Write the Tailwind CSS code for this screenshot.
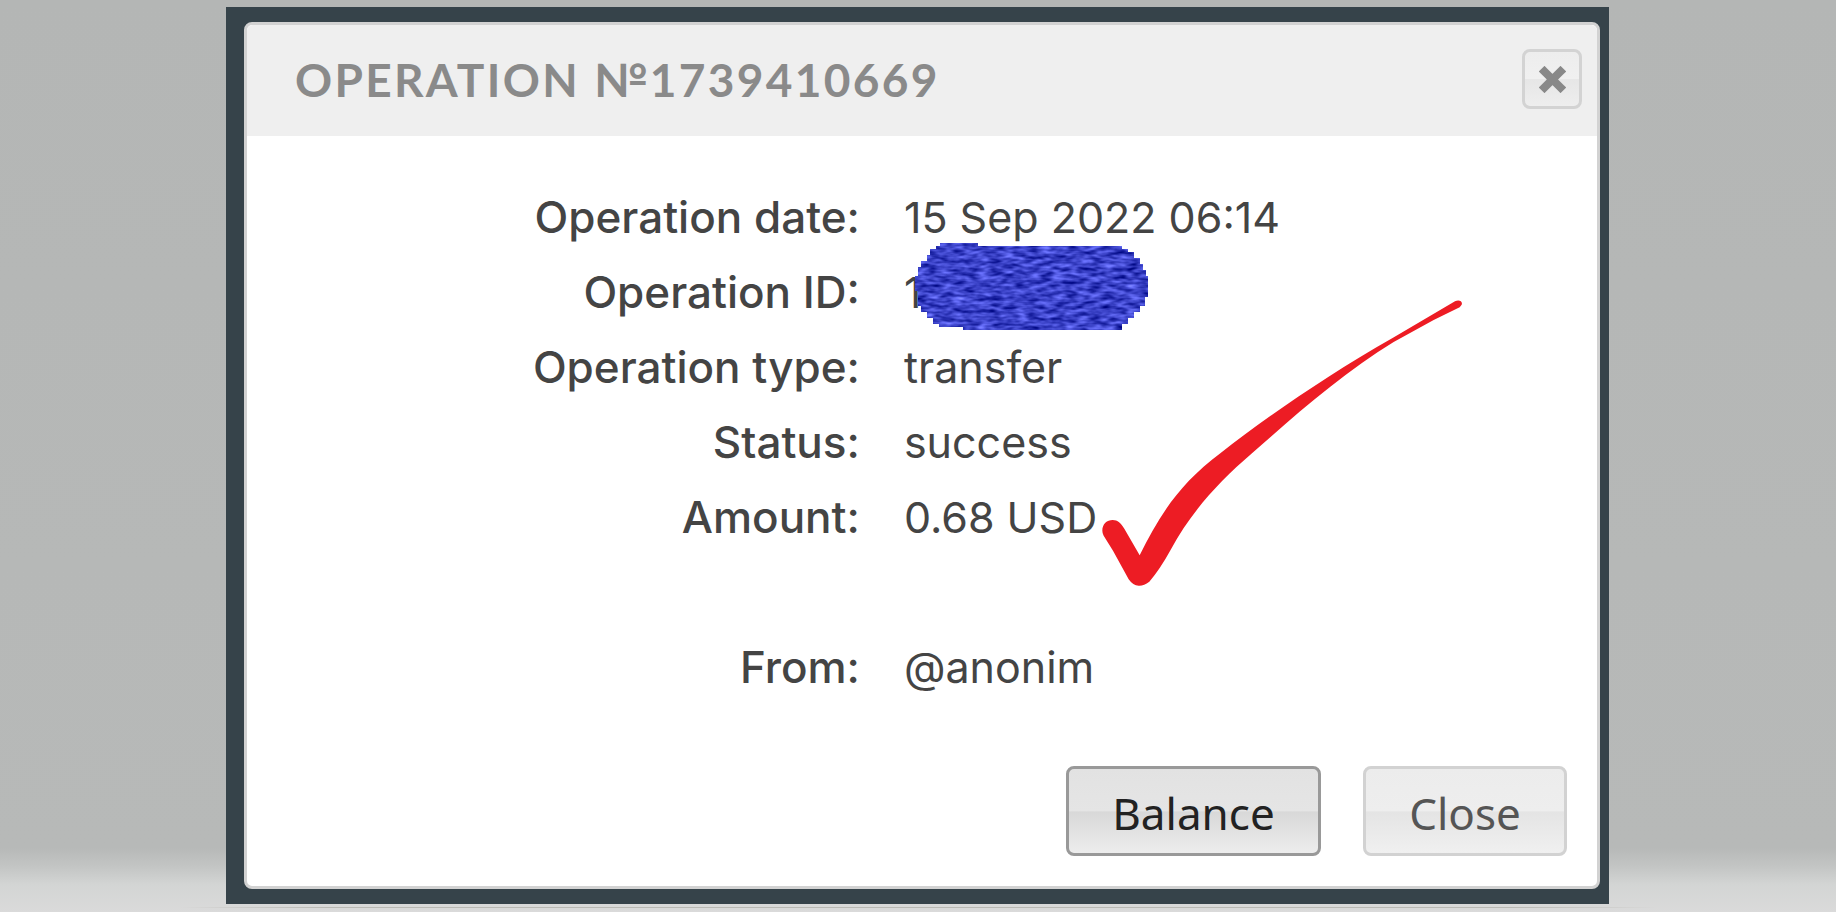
<!DOCTYPE html>
<html lang="en">
<head>
<meta charset="utf-8">
<title>Operation details</title>
<script src="https://cdn.jsdelivr.net/npm/@tailwindcss/browser@4"></script>
</head>
<body class="flex min-h-screen flex-col bg-[linear-gradient(to_bottom,#b4b6b5_0,#b7b9b8_93%,#c3c5c4_95%,#d3d5d4_97%,#dadada_100%)]">
<main class="mt-[7px] mr-[227px] ml-[226px] flex grow flex-col bg-[#36434a] pt-[15px] pr-[9px] pb-[15px] pl-[18px]">
  <section role="dialog" aria-labelledby="title" class="flex grow flex-col rounded-lg border-3 border-[#d2d2d2] bg-white">
    <header class="flex h-[111px] shrink-0 items-center justify-between rounded-t-md bg-[#efefef] pr-[15px] pb-[3px] pl-12">
      <h1 id="title" class="font-['Lato'] text-[46px] font-bold tracking-wider whitespace-nowrap text-[#8a8a8a]">OPERATION №1739410669</h1>
      <button type="button" aria-label="Close dialog" class="flex size-[60px] items-center justify-center rounded-lg border-3 border-[#d3d3d3] bg-[linear-gradient(to_bottom,#ededed_0,#f0f0f0_50%,#e6e6e6_51%,#eeeeee_100%)]">
        <svg class="size-[27px]" viewBox="0 0 27 27" stroke="#888" stroke-width="8" stroke-linecap="square" aria-hidden="true"><path d="M5.500 5.500L21.500 21.500M21.500 5.500L5.500 21.500"/></svg>
      </button>
    </header>
    <dl class="mt-11 grid grid-cols-[45.4%_1fr] gap-x-11 font-['Inter'] text-[43px] leading-[75px] whitespace-nowrap text-[#444] [&>dt]:text-right [&>dt]:text-[44px] [&>dt]:font-medium">
      <dt>Operation date:</dt><dd>15 Sep 2022 06:14</dd>
      <dt>Operation ID:</dt>
      <dd class="relative">1
        <!-- scribble over the identifier -->
        <svg class="absolute -top-3 left-[11px] h-[88px] w-[233px]" viewBox="0 0 233 88" aria-hidden="true">
          <defs>
            <filter id="scribble" x="0" y="0" width="1" height="1" color-interpolation-filters="sRGB">
              <feTurbulence type="fractalNoise" baseFrequency="0.08 0.24" numOctaves="2" seed="7" result="n"/>
              <feColorMatrix in="n" values=".7 0 0 0 -.12  .7 0 0 0 -.09  .8 0 0 0 .38  0 0 0 0 1"/>
              <feComposite in2="SourceGraphic" operator="in"/>
            </filter>
          </defs>
          <path filter="url(#scribble)" fill="#3a3acb" d="M25 0H63V3H207V6H213V9H219V15H225V21H228V27H231V33H233V54H230V63H225V69H219V75H213V81H207V87H48V84H24V81H18V75H12V69H6V63H3V48H0V33H3V24H6V18H12V12H15V6H21V3H25z"/>
        </svg>
      </dd>
      <dt>Operation type:</dt><dd>transfer</dd>
      <dt>Status:</dt><dd>success</dd>
      <dt>Amount:</dt>
      <dd class="relative">0.68 USD
        <!-- red check mark -->
        <svg class="absolute -top-[180px] left-[198px] h-[286px] w-[360px]" viewBox="65 60 1080 858" fill="#ed1c24" aria-hidden="true">
          <path d="M66 752C66 732 80 720 97 720C112 720 122 730 132 746L178 826C240 700 300 610 420 520C560 410 740 286 938 173L1124 64C1136 58 1148 64 1144 74L1138 82L1060 120L940 186C790 278 650 400 515 520C410 610 330 700 272 808Q238 870 207 905Q190 918 175 917Q158 917 145 898L98 812L70 767Q66 760 66 752Z"/>
        </svg>
      </dd>
      <dt class="mt-[75px]">From:</dt><dd class="mt-[75px]">@anonim</dd>
    </dl>
    <div class="mt-auto mr-[30px] mb-[30px] flex justify-end gap-[42px] font-['Noto_Sans'] text-[44px] leading-none">
      <button type="button" class="h-[90px] w-[255px] rounded-lg border-3 border-[#999] bg-[linear-gradient(to_bottom,#e2e2e2_0,#e5e5e5_50%,#d8d8d8_51%,#ededed_100%)] pt-1 text-[#222]">Balance</button>
      <button type="button" class="h-[90px] w-[204px] rounded-lg border-3 border-[#d2d2d2] bg-[linear-gradient(to_bottom,#ececec_0,#eeeeee_50%,#e4e4e4_51%,#f0f0f0_100%)] pt-1 text-[#555]">Close</button>
    </div>
  </section>
</main>
<div class="mx-[180px] mt-[3px] mb-1 h-px bg-[linear-gradient(to_right,transparent,#b9b9b4_10%,#b9b9b4_90%,transparent)]"></div>
</body>
</html>
